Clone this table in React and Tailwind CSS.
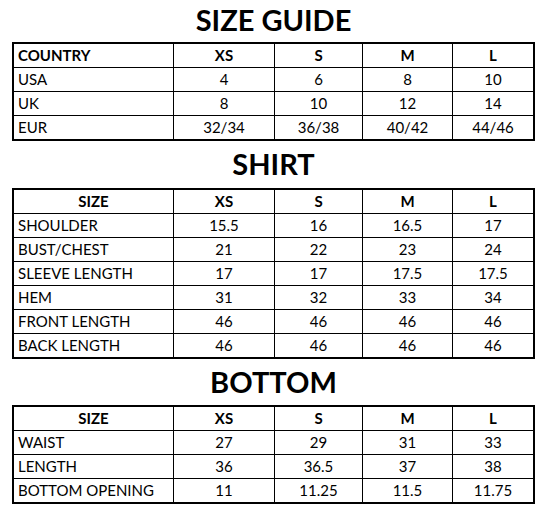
import React from "react";

const font = { fontFamily: "Lato, 'Liberation Sans', sans-serif" };

const tables = [
  {
    title: "SIZE GUIDE",
    head: "COUNTRY",
    headLeft: true,
    titleBox: "h-[42px] leading-[39px]",
    rows: [
      ["USA", "4", "6", "8", "10"],
      ["UK", "8", "10", "12", "14"],
      ["EUR", "32/34", "36/38", "40/42", "44/46"],
    ],
  },
  {
    title: "SHIRT",
    head: "SIZE",
    titleBox: "h-[47px] leading-[46px]",
    rows: [
      ["SHOULDER", "15.5", "16", "16.5", "17"],
      ["BUST/CHEST", "21", "22", "23", "24"],
      ["SLEEVE LENGTH", "17", "17", "17.5", "17.5"],
      ["HEM", "31", "32", "33", "34"],
      ["FRONT LENGTH", "46", "46", "46", "46"],
      ["BACK LENGTH", "46", "46", "46", "46"],
    ],
  },
  {
    title: "BOTTOM",
    head: "SIZE",
    titleBox: "h-[46px] leading-[46px]",
    rows: [
      ["WAIST", "27", "29", "31", "33"],
      ["LENGTH", "36", "36.5", "37", "38"],
      ["BOTTOM OPENING", "11", "11.25", "11.5", "11.75"],
    ],
  },
];

const SizeTable = ({ t }) => {
  const all = [[t.head, "XS", "S", "M", "L"], ...t.rows];
  return (
    <div>
      <h2 className={`text-center text-[29px] font-bold text-black ${t.titleBox}`}>{t.title}</h2>
      <div className="grid grid-cols-[160px_101px_88px_90px_80px] border-2 border-black">
        {all.map((row, r) =>
          row.map((cell, c) => {
            const last = r === all.length - 1;
            const cls = [
              "text-[15px] text-black whitespace-nowrap",
              last ? "h-[23px] leading-[23px]" : "h-[24px] leading-[23px] border-b border-black",
              c < 4 ? "border-r border-black" : "",
              r === 0 ? "font-bold" : "",
              c === 0 && !(r === 0 && !t.headLeft) ? "text-left pl-[4px]" : "text-center",
            ].join(" ");
            return (
              <div key={`${r}-${c}`} className={cls}>
                {cell}
              </div>
            );
          })
        )}
      </div>
    </div>
  );
};

export default function App() {
  return (
    <div className="w-[549px] h-[519px] bg-white" style={font}>
      <div className="ml-[12px] w-[523px]">
        {tables.map((t) => (
          <SizeTable key={t.title} t={t} />
        ))}
      </div>
    </div>
  );
}
